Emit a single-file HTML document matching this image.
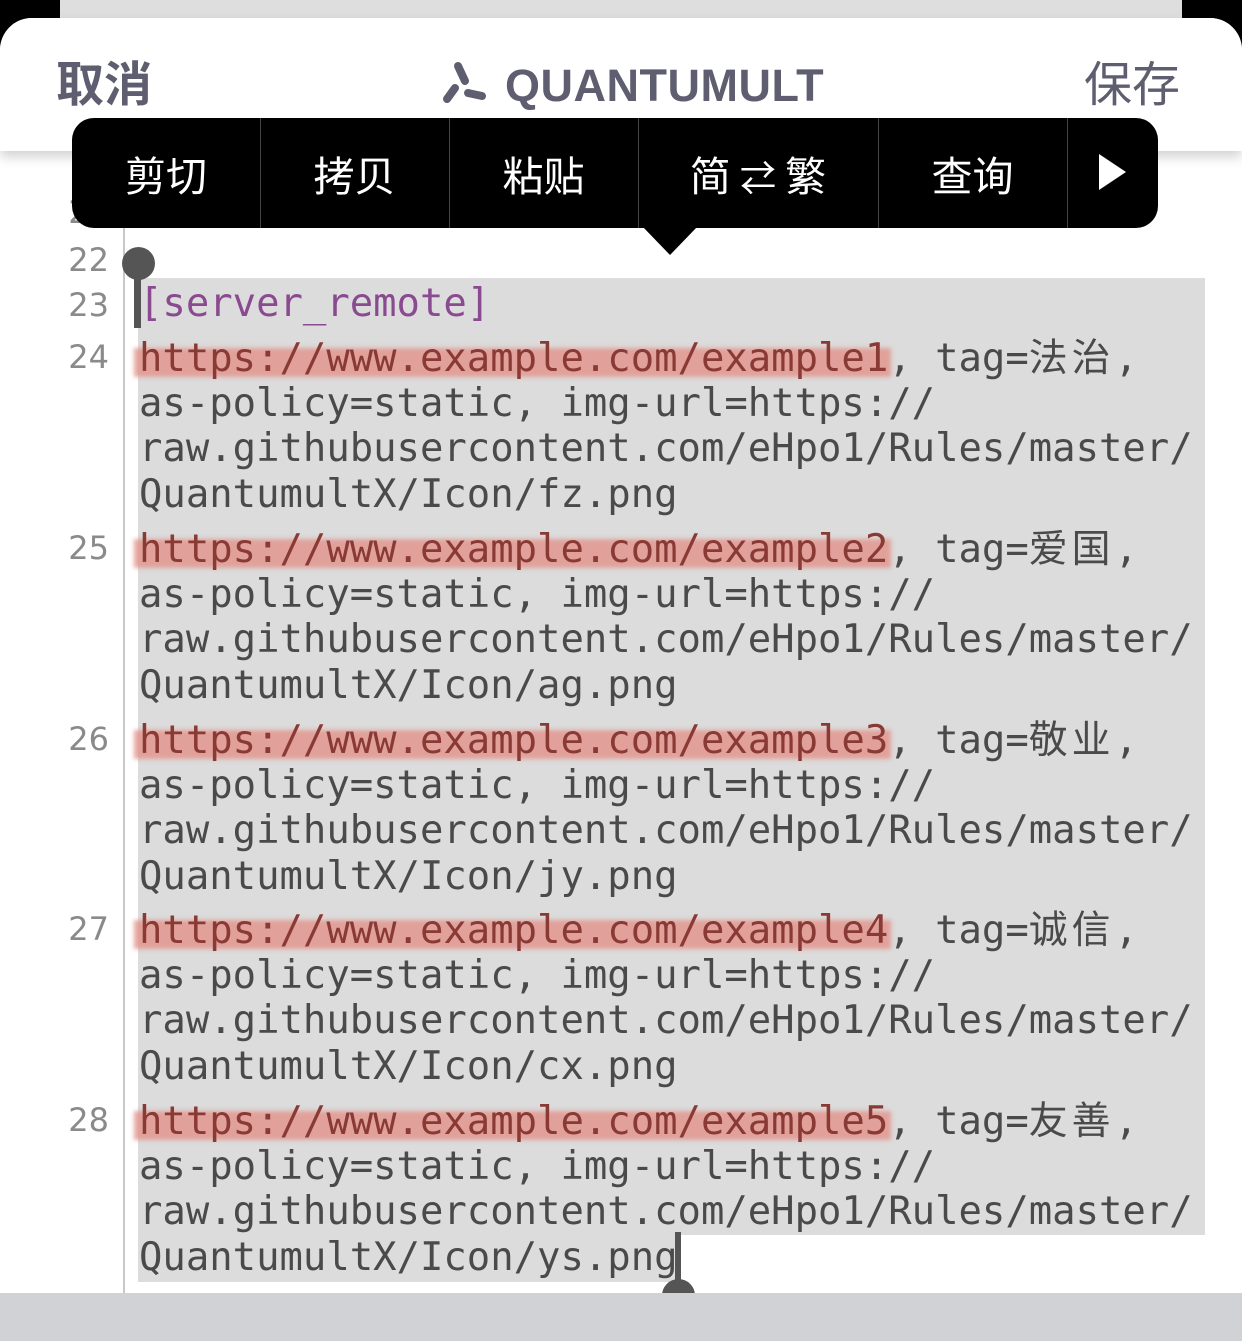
<!DOCTYPE html>
<html><head><meta charset="utf-8"><style>
*{margin:0;padding:0;box-sizing:border-box}
html,body{width:1242px;height:1341px;overflow:hidden;background:#000}
body{position:relative;font-family:"Liberation Sans","Noto Sans CJK SC",sans-serif}
.abs{position:absolute}
#back{left:60px;top:0;width:1122px;height:40px;background:#dedede}
#sheet{left:0;top:18px;width:1242px;height:1323px;background:#fff;border-radius:32px 32px 0 0}
#hdr{left:0;top:18px;width:1242px;height:133px;background:#fff;border-radius:32px 32px 0 0;box-shadow:0 6px 12px rgba(0,0,0,0.18)}
.ht{color:#5e5e70;font-size:48px;line-height:60px;top:56px}
.ln{color:#8a8a8a;font-size:32px;width:109px;text-align:right;left:0;line-height:48px;font-family:"DejaVu Sans","Liberation Sans",sans-serif}
.tx{left:139px;font-family:"DejaVu Sans Mono","Liberation Mono","Noto Sans CJK SC",monospace;font-size:38.9px;line-height:48px;color:#4a4a4a;white-space:pre}
.u{color:#8a3a34;position:relative}
.u:before{content:"";position:absolute;left:-5px;right:-3px;top:12px;height:29px;background:rgba(226,150,142,0.85);filter:blur(2px);z-index:-1}
.tx{z-index:1;isolation:isolate}
.c{letter-spacing:4px;font-family:"Noto Sans CJK SC",sans-serif}
#menu{left:72px;top:118px;width:1086px;height:110px;background:#000;border-radius:22px}
.mi{top:118px;height:110px;line-height:110px;color:#fff;font-size:41px;text-align:center;font-family:"Noto Sans CJK SC",sans-serif}
.dv{top:118px;width:1px;height:110px;background:#444}
</style></head><body>
<div class="abs" id="back"></div>
<div class="abs" id="sheet"></div>
<div class="abs" style="left:138px;top:278px;width:1067px;height:957px;background:#dcdcdc"></div>
<div class="abs" style="left:138px;top:1235px;width:540px;height:47px;background:#dcdcdc"></div>
<div class="abs" style="left:123px;top:150px;width:2px;height:1143px;background:#c8c8c8"></div>

<div class="abs ln" style="top:188px">21</div>
<div class="abs ln" style="top:236px">22</div>
<div class="abs ln" style="top:281px">23</div>
<div class="abs ln" style="top:333px">24</div>
<div class="abs ln" style="top:524px">25</div>
<div class="abs ln" style="top:715px">26</div>
<div class="abs ln" style="top:905px">27</div>
<div class="abs ln" style="top:1096px">28</div>
<div class="abs ln" style="top:1284px">29</div>

<div class="abs tx" style="top:280px;color:#8a4a90">[server_remote]</div>

<div class="abs tx" style="top:331px"><span class="u">https://www.example.com/example1</span>, tag=<span class="c">法治</span>,</div>
<div class="abs tx" style="top:380px">as-policy=static, img-url=https://</div>
<div class="abs tx" style="top:425px">raw.githubusercontent.com/eHpo1/Rules/master/</div>
<div class="abs tx" style="top:471px">QuantumultX/Icon/fz.png</div>

<div class="abs tx" style="top:522px"><span class="u">https://www.example.com/example2</span>, tag=<span class="c">爱国</span>,</div>
<div class="abs tx" style="top:571px">as-policy=static, img-url=https://</div>
<div class="abs tx" style="top:616px">raw.githubusercontent.com/eHpo1/Rules/master/</div>
<div class="abs tx" style="top:662px">QuantumultX/Icon/ag.png</div>

<div class="abs tx" style="top:713px"><span class="u">https://www.example.com/example3</span>, tag=<span class="c">敬业</span>,</div>
<div class="abs tx" style="top:762px">as-policy=static, img-url=https://</div>
<div class="abs tx" style="top:807px">raw.githubusercontent.com/eHpo1/Rules/master/</div>
<div class="abs tx" style="top:853px">QuantumultX/Icon/jy.png</div>

<div class="abs tx" style="top:903px"><span class="u">https://www.example.com/example4</span>, tag=<span class="c">诚信</span>,</div>
<div class="abs tx" style="top:952px">as-policy=static, img-url=https://</div>
<div class="abs tx" style="top:997px">raw.githubusercontent.com/eHpo1/Rules/master/</div>
<div class="abs tx" style="top:1043px">QuantumultX/Icon/cx.png</div>

<div class="abs tx" style="top:1094px"><span class="u">https://www.example.com/example5</span>, tag=<span class="c">友善</span>,</div>
<div class="abs tx" style="top:1143px">as-policy=static, img-url=https://</div>
<div class="abs tx" style="top:1188px">raw.githubusercontent.com/eHpo1/Rules/master/</div>
<div class="abs tx" style="top:1234px">QuantumultX/Icon/ys.png</div>

<div class="abs" style="left:122px;top:247px;width:33px;height:33px;border-radius:50%;background:#555"></div>
<div class="abs" style="left:134px;top:268px;width:7px;height:60px;background:#555"></div>
<div class="abs" style="left:675px;top:1232px;width:6px;height:58px;background:#555"></div>
<div class="abs" style="left:662px;top:1279px;width:33px;height:33px;border-radius:50%;background:#555"></div>

<div class="abs" style="left:0;top:1293px;width:1242px;height:48px;background:#d1d2d6"></div>

<div class="abs" id="hdr"></div>
<div class="abs ht" style="left:56px;font-weight:bold">取消</div>
<div class="abs ht" style="left:1084px">保存</div>
<svg class="abs" style="left:436px;top:56px" width="56" height="52" viewBox="436 56 56 52">
<g stroke="#5e5e70" stroke-width="8" stroke-linecap="round" fill="none">
<line x1="458" y1="66" x2="465" y2="81"/><line x1="455" y1="88" x2="447" y2="99"/><line x1="468" y1="93" x2="482" y2="96"/>
</g></svg>
<div class="abs" style="left:505px;top:56px;font-size:45px;font-weight:bold;color:#5e5e70;line-height:60px;letter-spacing:0.5px">QUANTUMULT</div>

<div class="abs" id="menu"></div>
<svg class="abs" style="left:640px;top:226px" width="60" height="32"><polygon points="2,0 58,0 30,29" fill="#000"/></svg>
<div class="abs dv" style="left:260px"></div>
<div class="abs dv" style="left:449px"></div>
<div class="abs dv" style="left:638px"></div>
<div class="abs dv" style="left:878px"></div>
<div class="abs dv" style="left:1067px"></div>
<div class="abs mi" style="left:72px;width:188px">剪切</div>
<div class="abs mi" style="left:260px;width:189px">拷贝</div>
<div class="abs mi" style="left:449px;width:189px">粘贴</div>
<div class="abs mi" style="left:638px;width:240px">简 <span style="font-size:36px">⇄</span> 繁</div>
<div class="abs mi" style="left:878px;width:189px">查询</div>
<svg class="abs" style="left:1096px;top:152px" width="34" height="40"><polygon points="3,2 30,20 3,38" fill="#fff"/></svg>
</body></html>
